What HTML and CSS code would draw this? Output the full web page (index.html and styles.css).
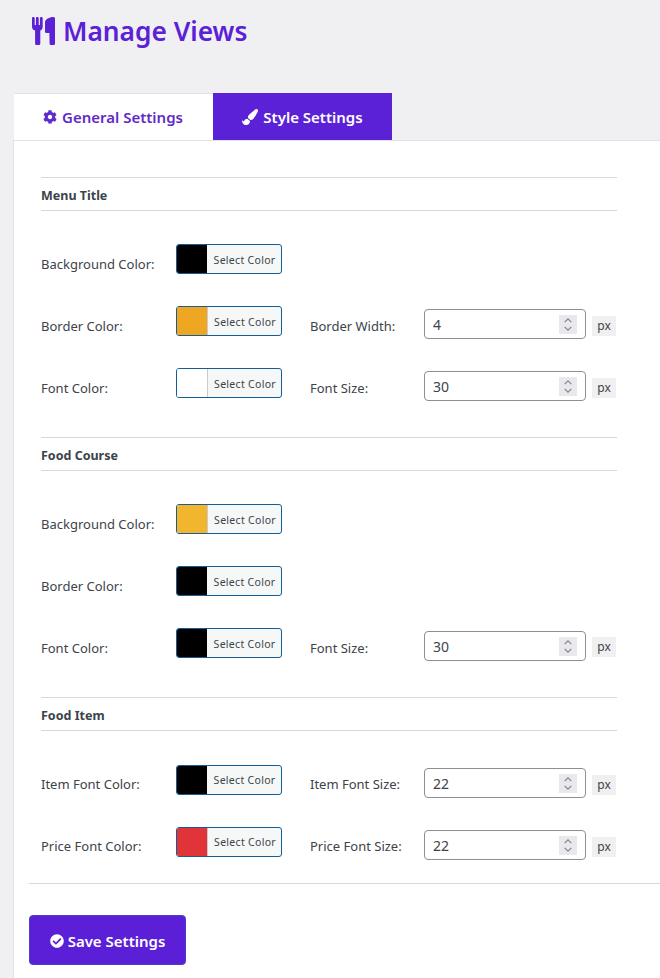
FILE: index.html
```html
<!DOCTYPE html>
<html lang="en">
<head>
<meta charset="utf-8">
<title>Manage Views</title>
<link rel="stylesheet" href="styles.css">
</head>
<body>
<svg class="defs" width="0" height="0" aria-hidden="true">
  <symbol id="i-spin" viewBox="0 0 18 20"><path d="M5.5 7.5 9 4l3.500 3.500M5.500 12.500 9 16l3.500-3.500" fill="none" stroke="#85858f" stroke-width="1.300"/></symbol>
</svg>
<header class="page-head">
  <svg class="head-icon" viewBox="0 0 23 28"><path d="M0 1.200C0 .5.500 0 1.300 0s1.400.5 1.400 1.200V8h1.200V1.200C3.900.5 4.500 0 5.300 0s1.400.5 1.400 1.200V8h1.200V1.200C7.900.5 8.500 0 9.300 0s1.400.5 1.400 1.200v8.500c0 2-1 3.300-2.400 3.900v12.800c0 .9-.7 1.600-1.600 1.600H4.700c-.9 0-1.600-.7-1.600-1.600V13.600C1 12.900 0 11.700 0 9.700zM13 5.200C13 2.500 17.500 0 21.300 0c1 0 1.700.6 1.700 1.400v25c0 .9-.7 1.600-1.600 1.600h-2.200c-.9 0-1.600-.7-1.600-1.600l-.2-10.400h-3.200c-.7 0-1.200-.5-1.200-1.200z"/></svg>
  <h1>Manage Views</h1>
</header>
<nav class="tabs">
  <a class="tab tab-general"><svg class="tab-icon" viewBox="0 0 512 512"><path d="M487.400 315.700l-42.600-24.600c4.300-23.200 4.300-47 0-70.200l42.600-24.600c4.900-2.800 7.100-8.600 5.500-14-11.100-35.600-30-67.800-54.700-94.600-3.800-4.100-10-5.100-14.800-2.300L380.800 110c-17.900-15.400-38.500-27.300-60.800-35.100V25.800c0-5.600-3.900-10.500-9.400-11.700-36.700-8.200-74.300-7.800-109.200 0-5.500 1.200-9.400 6.100-9.400 11.700V75c-22.200 7.900-42.800 19.800-60.800 35.100L88.700 85.500c-4.900-2.800-11-1.900-14.800 2.300-24.700 26.700-43.600 58.900-54.700 94.600-1.700 5.400.6 11.200 5.500 14L67.300 221c-4.300 23.200-4.300 47 0 70.200l-42.600 24.600c-4.900 2.800-7.100 8.600-5.500 14 11.100 35.600 30 67.800 54.700 94.600 3.800 4.100 10 5.100 14.800 2.300l42.600-24.600c17.900 15.400 38.500 27.300 60.800 35.100v49.200c0 5.600 3.900 10.500 9.400 11.700 36.700 8.200 74.300 7.800 109.200 0 5.500-1.200 9.400-6.100 9.400-11.700v-49.200c22.200-7.900 42.800-19.800 60.800-35.100l42.600 24.600c4.900 2.800 11 1.900 14.800-2.300 24.700-26.700 43.600-58.900 54.700-94.600 1.500-5.500-.7-11.300-5.600-14.100zM256 336c-44.100 0-80-35.900-80-80s35.900-80 80-80 80 35.900 80 80-35.900 80-80 80z"/></svg>General Settings</a>
  <a class="tab tab-style"><svg class="tab-icon tab-icon-brush" viewBox="0 0 512 512"><path d="M167.020 309.340c-40.120 2.580-76.530 17.860-97.190 72.300-2.350 6.210-8 9.980-14.590 9.980-11.110 0-45.460-27.670-55.250-34.350C0 439.620 37.930 512 128 512c75.860 0 128-43.770 128-120.190 0-3.110-.65-6.080-.97-9.130l-88.010-73.340zM457.890 0c-15.160 0-29.370 6.710-40.210 16.450C213.270 199.050 192 203.340 192 257.090c0 13.700 3.250 26.760 8.730 38.700l63.820 53.180c7.210 1.800 14.640 3.030 22.390 3.030 62.110 0 98.110-45.470 211.160-256.460 7.380-14.350 13.900-29.850 13.900-45.990C512 20.640 486 0 457.890 0z"/></svg>Style Settings</a>
</nav>
<main class="panel">
  <section class="group">
    <h2>Menu Title</h2>
    <div class="rows">
      <div class="row">
        <span class="label">Background Color:</span>
        <button class="swatch"><i class="chip c-black"></i><span>Select Color</span></button>
      </div>
      <div class="row">
        <span class="label">Border Color:</span>
        <button class="swatch"><i class="chip c-orange"></i><span>Select Color</span></button>
        <span class="label label-2">Border Width:</span>
        <div class="num"><input type="text" value="4"><svg class="spin"><use href="#i-spin"/></svg></div>
        <span class="unit">px</span>
      </div>
      <div class="row">
        <span class="label">Font Color:</span>
        <button class="swatch"><i class="chip c-white"></i><span>Select Color</span></button>
        <span class="label label-2">Font Size:</span>
        <div class="num"><input type="text" value="30"><svg class="spin"><use href="#i-spin"/></svg></div>
        <span class="unit">px</span>
      </div>
    </div>
  </section>
  <section class="group group-mid">
    <h2>Food Course</h2>
    <div class="rows">
      <div class="row">
        <span class="label">Background Color:</span>
        <button class="swatch"><i class="chip c-yellow"></i><span>Select Color</span></button>
      </div>
      <div class="row">
        <span class="label">Border Color:</span>
        <button class="swatch"><i class="chip c-black"></i><span>Select Color</span></button>
      </div>
      <div class="row">
        <span class="label">Font Color:</span>
        <button class="swatch"><i class="chip c-black"></i><span>Select Color</span></button>
        <span class="label label-2">Font Size:</span>
        <div class="num"><input type="text" value="30"><svg class="spin"><use href="#i-spin"/></svg></div>
        <span class="unit">px</span>
      </div>
    </div>
  </section>
  <section class="group group-last">
    <h2>Food Item</h2>
    <div class="rows">
      <div class="row">
        <span class="label">Item Font Color:</span>
        <button class="swatch"><i class="chip c-black"></i><span>Select Color</span></button>
        <span class="label label-2">Item Font Size:</span>
        <div class="num"><input type="text" value="22"><svg class="spin"><use href="#i-spin"/></svg></div>
        <span class="unit">px</span>
      </div>
      <div class="row">
        <span class="label">Price Font Color:</span>
        <button class="swatch"><i class="chip c-red"></i><span>Select Color</span></button>
        <span class="label label-2">Price Font Size:</span>
        <div class="num"><input type="text" value="22"><svg class="spin"><use href="#i-spin"/></svg></div>
        <span class="unit">px</span>
      </div>
    </div>
  </section>
  <div class="actions">
    <button class="save"><svg class="save-icon" viewBox="0 0 512 512"><path d="M504 256c0 136.967-111.033 248-248 248S8 392.967 8 256 119.033 8 256 8s248 111.033 248 248zM227.314 387.314l184-184c6.248-6.248 6.248-16.379 0-22.627l-22.627-22.627c-6.248-6.249-16.379-6.249-22.628 0L216 308.118l-70.059-70.059c-6.248-6.248-16.379-6.248-22.628 0l-22.627 22.627c-6.248 6.248-6.248 16.379 0 22.627l104 104c6.249 6.250 16.379 6.250 22.628.001z"/></svg><span>Save Settings</span></button>
  </div>
</main>
</body>
</html>
```

FILE: styles.css
```css
* { box-sizing: border-box; }
html, body { margin: 0; padding: 0; height: 978px; overflow: hidden; }
body {
  background: #f0f0f3;
  font-family: "Noto Sans", "Open Sans", sans-serif;
  color: #3c434a;
}
.defs { position: absolute; }
.page-head {
  display: flex;
  align-items: center;
  gap: 8px;
  height: 93px;
  padding: 0 0 32px 32px;
  color: #5b21d6;
}
.head-icon { width: 23px; height: 28px; fill: #5b21d6; }
h1 { margin: 0; font-size: 26.300px; font-weight: 600; line-height: 36px; }
.tabs { display: flex; padding-left: 14px; height: 47px; }
.tab {
  display: flex;
  align-items: center;
  justify-content: center;
  gap: 5px;
  font-size: 15px;
  font-weight: 600;
}
.tab-general {
  width: 199px;
  padding-right: 1px;
  background: #fff;
  border-top: 1px solid #e2e2e4;
  color: #5f2cc9;
}
.tab-style { width: 179px; background: #5b21d6; color: #fff; }
.tab-icon { width: 14px; height: 14px; fill: currentColor; }
.tab-icon-brush { width: 16px; height: 16px; }
.panel {
  margin-left: 13px;
  height: 838px;
  background: #fff;
  border-top: 1px solid #e2e2e4;
  border-left: 1px solid #e2e2e4;
  padding: 36px 0 0 15px;
}
.group { margin: 0 43px 0 12px; border-top: 1px solid #d9d9dc; padding-bottom: 0; }
.group h2 {
  margin: 0;
  height: 33px;
  line-height: 35px;
  font-size: 12.500px;
  font-weight: 700;
  color: #3c434a;
  border-bottom: 1px solid #d9d9dc;
}
.rows { padding: 33px 0 39px; display: flex; flex-direction: column; gap: 32px; }
.group-last .rows { padding: 34px 0 26px; }
.group-last .label { padding-top: 10px; }
.group-last .swatch span { line-height: 28px; }
.group-mid .unit { margin-top: 9px; }
.row { display: flex; align-items: flex-start; height: 30px; }
.label {
  width: 135px;
  flex: none;
  font-size: 13px;
  line-height: 18px;
  padding-top: 11px;
}
.label-2 { width: 114px; margin-left: 28px; }
.swatch {
  display: flex;
  align-items: stretch;
  width: 106px;
  height: 30px;
  flex: none;
  padding: 0;
  border: 1px solid #135e96;
  border-radius: 3px;
  background: #f6f7f7;
  overflow: hidden;
  font: inherit;
  color: #3c434a;
}
.swatch span {
  flex: 1;
  font-size: 10.500px;
  line-height: 30px;
  letter-spacing: .3px;
  text-align: center;
  padding-left: 1px;
}
.chip { width: 31px; flex: none; border-right: 1px solid #c9cbce; }
.c-black { background: #000; border-right: 0; width: 30px; }
.c-orange { background: #eea623; }
.c-white { background: #fff; }
.c-yellow { background: #f2b62e; }
.c-red { background: #e13438; }
.num {
  display: flex;
  align-items: center;
  width: 162px;
  height: 30px;
  margin-top: 3px;
  flex: none;
  border: 1px solid #8c8f94;
  border-radius: 4px;
  background: #fff;
  padding-right: 8px;
}
.num input {
  flex: 1;
  min-width: 0;
  height: 100%;
  border: 0;
  outline: 0;
  padding: 0 0 0 8px;
  background: transparent;
  font: inherit;
  font-size: 14px;
  color: #3c434a;
}
.spin { width: 18px; height: 19px; flex: none; background: #e9e9ed; }
.unit {
  flex: none;
  width: 24px;
  height: 20px;
  margin: 10px 0 0 6px;
  background: #f0f0f1;
  font-size: 12px;
  line-height: 20px;
  text-align: center;
}
.actions { border-top: 1px solid #d9d9dc; padding-top: 31px; margin-top: 0; }
.save {
  display: flex;
  align-items: center;
  justify-content: center;
  gap: 4px;
  width: 157px;
  height: 50px;
  padding: 2px 0 0;
  border: 1px solid #4b3fc4;
  border-radius: 4px;
  background: #5a1fd6;
  color: #fff;
  font: inherit;
  font-size: 15px;
  font-weight: 600;
}
.save-icon { width: 14px; height: 14px; fill: #fff; }
```
